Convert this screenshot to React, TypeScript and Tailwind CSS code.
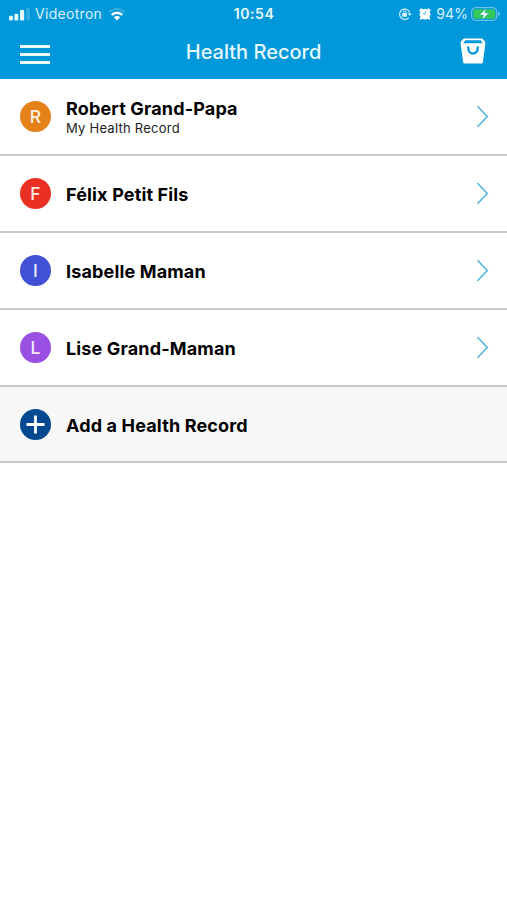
import React from 'react';

interface HealthRecord {
  initial: string;
  name: string;
  caption?: string;
  avatar: string;
}

const records: HealthRecord[] = [
  { initial: 'R', name: 'Robert Grand-Papa', caption: 'My Health Record', avatar: 'bg-[#e48119]' },
  { initial: 'F', name: 'Félix Petit Fils', avatar: 'bg-[#e93023]' },
  { initial: 'I', name: 'Isabelle Maman', avatar: 'bg-[#4150d4]' },
  { initial: 'L', name: 'Lise Grand-Maman', avatar: 'bg-[#984fe2]' },
];

const SignalIcon = () => (
  <svg width="22" height="14" viewBox="0 0 22 14" fill="#e6f8ff">
    <rect x="0" y="8.8" width="3.9" height="4.7" rx="1" />
    <rect x="5.4" y="6.8" width="3.9" height="6.7" rx="1" />
    <rect x="11" y="3" width="4.2" height="10.5" rx="1" />
    <rect x="17" y="0.8" width="4" height="12.7" rx="1" opacity="0.2" />
  </svg>
);

const WifiIcon = () => (
  <svg width="18" height="14" viewBox="0 0 18 14" fill="none" stroke="#fff">
    <path d="M1.3 5.2C5.7 0.8 12.3 0.8 16.7 5.2" strokeWidth="2" opacity="0.22" />
    <path d="M3.7 8C6.8 4.9 11.2 4.9 14.3 8" strokeWidth="2.4" />
    <path d="M9 13.4L5.9 10.3C7.6 8.7 10.4 8.7 12.1 10.3Z" fill="#fff" stroke="none" />
  </svg>
);

const RotationLockIcon = () => (
  <svg width="14" height="14" viewBox="0 0 14 14" fill="none" stroke="#d9f3ff">
    <path d="M10.8 10.6A5.2 5.2 0 1 1 11.6 5.2" strokeWidth="1.2" />
    <path d="M9.6 6.3H13.6L11.7 9Z" fill="#d9f3ff" stroke="none" />
    <rect x="4.2" y="6" width="4.8" height="3.8" rx="0.6" fill="#d9f3ff" stroke="none" />
    <path d="M5.1 6.6V5.3A1.5 1.5 0 0 1 8.1 5.3V6.6" strokeWidth="1" />
  </svg>
);

const AlarmIcon = () => (
  <svg width="14" height="14" viewBox="0 0 14 14">
    <circle cx="7" cy="7.2" r="5.4" fill="#fff" />
    <path d="M2.3 3.4L3.6 2.3M11.7 3.4L10.4 2.3M3.4 11L2.8 11.7M10.6 11L11.2 11.7" stroke="#fff" strokeWidth="2" strokeLinecap="round" />
    <path d="M7.2 4.4V7.4L5 6.4" fill="none" stroke="#4fb5e2" strokeWidth="0.9" strokeLinecap="round" />
  </svg>
);

const BatteryIcon = () => (
  <svg width="30" height="14" viewBox="0 0 30 14">
    <rect x="0.6" y="0.6" width="25.2" height="12.8" rx="3.8" fill="none" stroke="#7ccbee" strokeWidth="1" />
    <rect x="2.2" y="2.2" width="22" height="9.6" rx="2.2" fill="#35c759" />
    <path d="M27.2 4.6C29.6 5.3 29.6 8.7 27.2 9.4Z" fill="#6cc5ec" />
    <path d="M15 1.4L8.6 7.9H12.5L11.3 12.8L17.7 6.1H13.8Z" fill="#fff" stroke="#169cc4" strokeWidth="0.4" />
  </svg>
);

const BagIcon = () => (
  <svg width="26" height="26" viewBox="0 0 26 26">
    <path
      fill="#fff"
      fillRule="evenodd"
      d="M4.4 0.4H21.6C22.3 0.4 22.7 0.7 23.1 1.2L25 3.8C25.4 4.4 25.5 4.8 25.4 5.5L22.9 23.9C22.7 25 22.2 25.4 21.2 25.4H4.8C3.8 25.4 3.3 25 3.1 23.9L0.6 5.5C0.5 4.8 0.6 4.4 1 3.8L2.9 1.2C3.3 0.7 3.7 0.4 4.4 0.4ZM5.4 2.3L3.2 5.2H22.8L20.6 2.3Z"
    />
    <path d="M8.2 9.4C8.2 17.6 17.8 17.6 17.8 9.4" fill="none" stroke="#0098da" strokeWidth="2.3" strokeLinecap="round" />
  </svg>
);

const StatusBar = () => (
  <div className="grid h-[28px] grid-cols-3 items-center pl-[9px] pr-[6px] text-[14px] leading-none text-[#d9f3ff]">
    <div className="flex items-center">
      <SignalIcon />
      <span className="ml-[4px] mr-[6px] tracking-[0.3px]">Videotron</span>
      <WifiIcon />
    </div>
    <span className="-ml-[2px] text-center font-semibold tracking-[0.6px] text-[#eafaff]">10:54</span>
    <div className="flex items-center justify-end">
      <RotationLockIcon />
      <span className="ml-[6px]">
        <AlarmIcon />
      </span>
      <span className="ml-[4px] mr-[3px] tracking-[0.1px]">94%</span>
      <BatteryIcon />
    </div>
  </div>
);

const Header = () => (
  <header className="h-[79px] bg-[#0098da]">
    <StatusBar />
    <div className="flex h-[50px] items-center justify-between pl-[20px] pr-[21px]">
      <button className="flex w-[30px] flex-col gap-[5px] pt-[3px]" aria-label="Menu">
        <span className="h-[3px] bg-[#eafaff]" />
        <span className="h-[3px] bg-[#eafaff]" />
        <span className="h-[3px] bg-[#eafaff]" />
      </button>
      <h1 className="mr-[3px] pb-[2px] text-[20px] font-medium leading-none tracking-[0px] text-[#e6f8ff]">Health Record</h1>
      <button className="-mt-[4px]" aria-label="Bag">
        <BagIcon />
      </button>
    </div>
  </header>
);

const RecordRow: React.FC<{ record: HealthRecord }> = ({ record }) => (
  <li className="flex h-[77px] items-center border-b-2 border-[#cacaca] pl-[20px] pr-[18px]">
    <span className={`flex size-[31px] items-center justify-center rounded-full pt-px text-[17.5px] font-medium text-white/90 ${record.avatar}`}>
      {record.initial}
    </span>
    <div className={`ml-[15px] flex-1 ${record.caption ? '' : 'pt-[2px]'}`}>
      <p className="text-[18px] font-bold leading-[22px] tracking-[0.15px]">{record.name}</p>
      {record.caption && <p className="text-[13px] leading-[16px] tracking-[0.24px] text-[#222]">{record.caption}</p>}
    </div>
    <svg width="13" height="23" viewBox="0 0 13 23" fill="none" stroke="#55b5dc" strokeWidth="1.6">
      <path d="M1.5 1.2L11.3 11.5L1.5 21.8" />
    </svg>
  </li>
);

const App = () => (
  <div className="min-h-screen bg-white font-['Inter',sans-serif] text-black">
    <Header />
    <ul>
      {records.map((record) => (
        <RecordRow key={record.name} record={record} />
      ))}
      <li className="flex h-[76px] items-center border-b-2 border-[#cacaca] bg-[#f7f7f7] pl-[20px]">
        <svg className="mt-[1px]" width="31" height="31" viewBox="0 0 31 31">
          <circle cx="15.5" cy="15.5" r="15.5" fill="#004990" />
          <path d="M15.5 6.5V24.5M6.5 15.5H24.5" stroke="#fff" strokeWidth="2.8" />
        </svg>
        <span className="ml-[15px] pt-[3px] text-[18px] font-bold leading-[22px] tracking-[0.15px]">Add a Health Record</span>
      </li>
    </ul>
  </div>
);

export default App;
